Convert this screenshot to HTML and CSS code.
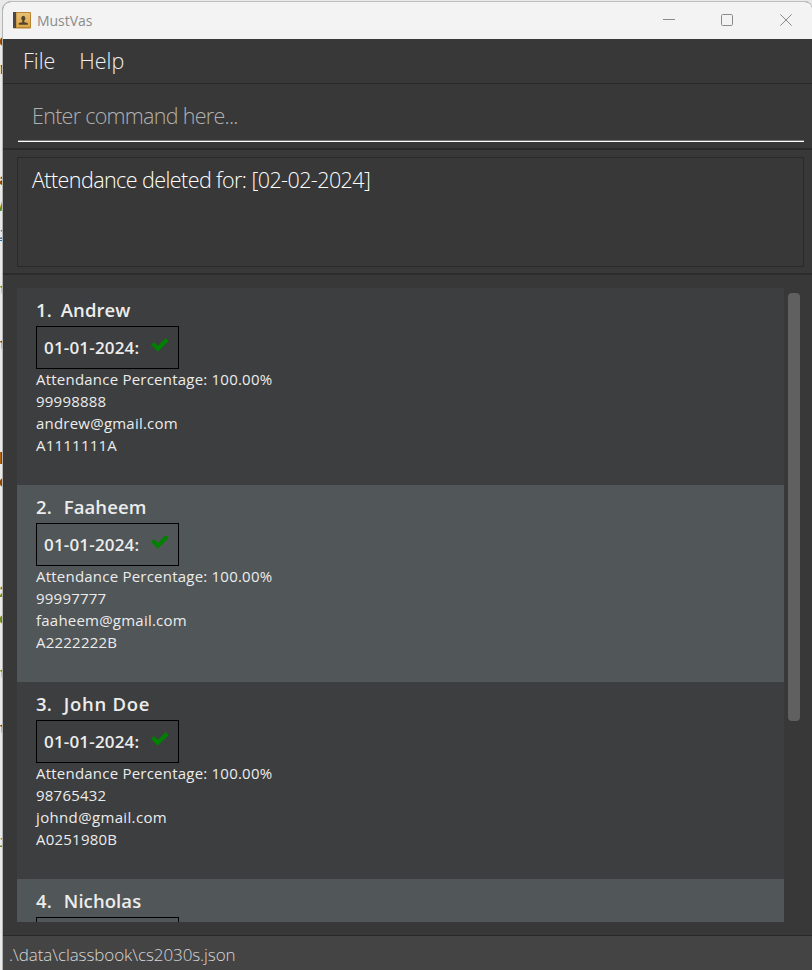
FILE: index.html
```html
<!DOCTYPE html>
<html lang="en">
<head>
<meta charset="utf-8">
<title>MustVas</title>
<link rel="stylesheet" href="styles.css">
</head>
<body>
<div class="desktop">
  <div class="editor" aria-hidden="true">
    <span style="top:32px">c</span>
    <span style="top:60px">r</span>
    <span style="top:171px">a</span>
    <span class="green" style="top:197px">A</span>
    <span class="link" style="top:225px">i</span>
    <span class="green" style="top:281px">t</span>
    <span style="top:336px">t</span>
    <span style="top:447px">p</span>
    <span style="top:473px">e</span>
    <span style="top:500px">:</span>
    <span class="green" style="top:583px">2</span>
    <span class="green" style="top:610px">e</span>
    <span class="green" style="top:665px">t</span>
    <span style="top:720px">t</span>
    <span class="green" style="top:833px">i</span>
  </div>
  <main class="window">
    <header class="titlebar">
      <svg class="app-icon" width="18" height="17" viewBox="0 0 18 17">
        <defs><linearGradient id="book" x1="0" y1="0" x2="0" y2="1"><stop offset="0" stop-color="#e6c078"/><stop offset="1" stop-color="#dba748"/></linearGradient></defs>
        <rect x="0" y="0" width="18" height="16.5" rx="1" fill="#b98432"/>
        <rect x="3.5" y="1" width="13.5" height="14" fill="url(#book)"/>
        <rect x="0" y="0" width="3" height="16" fill="#514646"/>
        <ellipse cx="10.3" cy="6.2" rx="2" ry="2.5" fill="#55432b"/>
        <path d="M9.300 8h2v2.200l3.500 .8v1.800h-9v-1.800l3.500-.8z" fill="#55432b"/>
      </svg>
      <span class="title">MustVas</span>
      <svg class="controls" width="130" height="14" viewBox="0 0 130 14" fill="none" stroke="#8b8b8b">
        <path d="M0 6.500h12"/>
        <rect x="58.500" y="1.500" width="11" height="11" rx="1.200"/>
        <path d="M117.300 1.300l11.400 11.400M128.700 1.300l-11.400 11.400"/>
      </svg>
    </header>
    <nav class="menu"><span class="file">File</span><span class="help">Help</span></nav>
    <section class="command"><div class="field"><span>Enter command here...</span></div></section>
    <section class="result"><div class="result-box"><span>Attendance deleted for: [02-02-2024]</span></div></section>
    <section class="content">
      <div class="list">
        <article class="card">
          <h2 class="narrow"><span>1.</span><span>Andrew</span></h2>
          <div class="attendance"><b>01-01-2024:</b><svg width="20" height="16" viewBox="0 0 20 16"><path d="M2.500 7.500l5.300 5.200 9.400-9.200" fill="none" stroke="#008000" stroke-width="4.200"/></svg></div>
          <p>Attendance Percentage: 100.00%</p><p>99998888</p><p>andrew@gmail.com</p><p>A1111111A</p>
        </article>
        <article class="card">
          <h2><span>2.</span><span>Faaheem</span></h2>
          <div class="attendance"><b>01-01-2024:</b><svg width="20" height="16" viewBox="0 0 20 16"><path d="M2.500 7.500l5.300 5.200 9.400-9.200" fill="none" stroke="#008000" stroke-width="4.200"/></svg></div>
          <p>Attendance Percentage: 100.00%</p><p>99997777</p><p>faaheem@gmail.com</p><p>A2222222B</p>
        </article>
        <article class="card">
          <h2><span>3.</span><span class="wide">John Doe</span></h2>
          <div class="attendance"><b>01-01-2024:</b><svg width="20" height="16" viewBox="0 0 20 16"><path d="M2.500 7.500l5.300 5.200 9.400-9.200" fill="none" stroke="#008000" stroke-width="4.200"/></svg></div>
          <p>Attendance Percentage: 100.00%</p><p>98765432</p><p class="john">johnd@gmail.com</p><p>A0251980B</p>
        </article>
        <article class="card">
          <h2><span>4.</span><span>Nicholas</span></h2>
          <div class="attendance"></div>
        </article>
      </div>
      <div class="scrollbar"></div>
    </section>
    <footer class="status"><span>.\data\classbook\cs2030s.json</span></footer>
  </main>
</div>
</body>
</html>
```
FILE: styles.css
```css
* { box-sizing: border-box; }
body { margin: 0; font-family: "Open Sans", "Noto Sans", sans-serif; }
.desktop { position: relative; width: 812px; height: 970px; overflow: hidden; background: #e9e9e9; padding: 1px 0 0 2px; }
.editor { position: absolute; left: 0; top: 0; width: 3px; height: 970px; overflow: hidden; font: bold 17px/20px "Liberation Mono", monospace; color: #7b450c; }
.editor span { position: absolute; left: -1px; }
.editor .green { color: #4b9020; }
.editor .link { color: #1674b8; text-decoration: underline; }
.window { position: relative; height: 969px; width: 810px; display: flex; flex-direction: column; background: #383838; border-left: 1px solid #b4b4b4; border-top: 1px solid #bdbdbd; border-radius: 9px 7px 0 0; overflow: hidden; }
.titlebar { flex: none; height: 37px; display: flex; align-items: center; background: #f3f3f3; padding: 0 19px 0 10px; }
.title { margin-left: 6px; font-size: 14px; color: #8b8b8b; letter-spacing: -0.05px; }
.controls { margin: -2px 0 0 auto; }
.menu { flex: none; height: 45px; display: flex; align-items: center; padding: 0 0 1px 20px; border-bottom: 1px solid #292929; font-size: 21.500px; font-weight: 300; color: #f0f0f0; }
.menu .help { margin-left: 24px; }
.command { flex: none; height: 64px; padding: 8px 8px 0 15px; }
.field { height: 50px; padding: 0 14px 2px; display: flex; align-items: center; border-bottom: 1px solid #fff; box-shadow: inset 0 -1px #777; font-size: 21.500px; letter-spacing: -0.720px; font-weight: 300; color: #b0b0b0; }
.result { flex: none; height: 125px; border-top: 2px solid #2b2b2b; padding: 7px 8px 0 14px; }
.result-box { height: 110px; border: 1px solid #2a2a2a; padding: 7px 14px; font-size: 21.500px; letter-spacing: -0.570px; line-height: 29px; font-weight: 300; color: #fff; }
.content { flex: none; height: 662px; display: flex; border-top: 2px solid #2b2b2b; padding: 13px 0 13px 14px; }
.list { width: 767px; height: 634px; overflow: hidden; }
.card { height: 197px; padding: 7px 19px 0; background: #3c3e3f; color: #ececec; }
.card:nth-child(even) { background: #515658; }
.card h2 { margin: 0; height: 31px; line-height: 30px; display: flex; gap: 12px; font-size: 18.500px; font-weight: 600; letter-spacing: 0.080px; }
.card h2.narrow { gap: 9px; }
.card h2 .wide { letter-spacing: 0.700px; }
.attendance { width: 143px; height: 43px; border: 1px solid #000; display: flex; align-items: center; padding: 0 7px; }
.attendance b { font-size: 17px; font-weight: 600; letter-spacing: 0.180px; }
.attendance svg { margin: -7px 0 0 11px; flex: none; }
.card p { position: relative; top: -1px; margin: 0; height: 22px; line-height: 22px; font-size: 15px; letter-spacing: 0.220px; white-space: nowrap; }
.card p.john { letter-spacing: 0.350px; }
.scrollbar { width: 12px; height: 428px; margin: 5px 0 0 4px; border-radius: 4px; background: #606060; }
.status { flex: 1; border-top: 1px solid #292929; background: #444; padding: 5px 6px 0; font-size: 17px; letter-spacing: -0.080px; line-height: 27px; font-weight: 300; color: #d6d6d6; }
```
